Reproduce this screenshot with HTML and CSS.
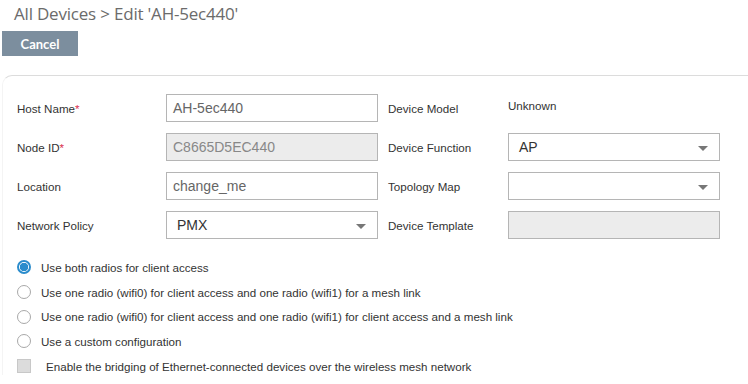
FILE: index.html
```html
<!DOCTYPE html>
<html>
<head>
<meta charset="utf-8">
<link rel="stylesheet" href="styles.css">
</head>
<body>
<div class="page">
  <h1 class="title">All Devices &gt; Edit 'AH-5ec440'</h1>
  <button class="cancel">Cancel</button>
  <div class="panel">
    <div class="grid">
      <label class="lbl">Host Name<span class="req">*</span></label>
      <div class="field">AH-5ec440</div>
      <label class="lbl">Device Model</label>
      <div class="value">Unknown</div>

      <label class="lbl">Node ID<span class="req">*</span></label>
      <div class="field disabled">C8665D5EC440</div>
      <label class="lbl">Device Function</label>
      <div class="field select">AP<span class="caret"></span></div>

      <label class="lbl">Location</label>
      <div class="field">change_me</div>
      <label class="lbl">Topology Map</label>
      <div class="field select"><span class="caret"></span></div>

      <label class="lbl">Network Policy</label>
      <div class="field select">PMX<span class="caret"></span></div>
      <label class="lbl">Device Template</label>
      <div class="field disabled"></div>
    </div>
    <ul class="options">
      <li class="opt"><span class="radio checked"></span>Use both radios for client access</li>
      <li class="opt"><span class="radio"></span>Use one radio (wifi0) for client access and one radio (wifi1) for a mesh link</li>
      <li class="opt"><span class="radio"></span>Use one radio (wifi0) for client access and one radio (wifi1) for client access and a mesh link</li>
      <li class="opt"><span class="radio"></span>Use a custom configuration</li>
      <li class="opt chk"><span class="box"></span>Enable the bridging of Ethernet-connected devices over the wireless mesh network</li>
    </ul>
  </div>
</div>
</body>
</html>
```

FILE: styles.css
```css
html, body {
  margin: 0;
  padding: 0;
  background: #fff;
}
.page {
  width: 748px;
  height: 384px;
  overflow: hidden;
  font-family: "Liberation Sans", Arial, sans-serif;
}
.title {
  margin: 0;
  padding: 2px 0 0 14px;
  height: 29px;
  box-sizing: border-box;
  font-family: "Open Sans", sans-serif;
  font-weight: 400;
  font-size: 17px;
  line-height: 24px;
  color: #6b6b6b;
  letter-spacing: -0.2px;
}
.cancel {
  display: block;
  margin: 2px 0 0 2px;
  width: 76px;
  height: 25px;
  border: none;
  background: #7c8e9e;
  color: #fff;
  font-family: "Lato", sans-serif;
  font-weight: 700;
  font-size: 13px;
  padding: 0;
}
.panel {
  margin-top: 19px;
  margin-left: 2px;
  border-top: 1px solid #dcdcdc;
  border-left: 1px solid #f4f4f4;
  border-top-left-radius: 10px;
  padding: 18px 0 0 0;
  height: 300px;
  box-sizing: border-box;
}
.grid {
  display: grid;
  grid-template-columns: 139px 212px 110px 212px;
  column-gap: 10px;
  grid-auto-rows: 28px;
  row-gap: 11px;
  padding-left: 14px;
  align-items: center;
}
.lbl {
  font-size: 11.6px;
  color: #333;
}
.req { color: #d9304f; }
.value {
  font-size: 11.6px;
  color: #333;
  align-self: start;
  padding-top: 5px;
}
.field {
  height: 28px;
  box-sizing: border-box;
  border: 1px solid #b5b5b5;
  background: #fff;
  font-size: 14px;
  color: #666;
  line-height: 26px;
  padding-left: 6px;
  position: relative;
}
.field.disabled {
  background: #ececec;
  color: #888;
}
.field.select {
  color: #333;
  padding-left: 10px;
}
.caret {
  position: absolute;
  right: 11px;
  top: 12px;
  width: 0;
  height: 0;
  border-left: 5px solid transparent;
  border-right: 5px solid transparent;
  border-top: 5px solid #777;
}
.options {
  list-style: none;
  margin: 16px 0 0 0;
  padding: 0 0 0 14px;
}
.opt {
  display: flex;
  align-items: center;
  height: 24.7px;
  font-size: 11.6px;
  color: #333;
}
.radio {
  width: 14px;
  height: 14px;
  box-sizing: border-box;
  border: 1px solid #a8a8a8;
  border-radius: 50%;
  background: #fff;
  margin-right: 10px;
  flex: none;
}
.radio.checked {
  border: 2px solid #2a8ccc;
  background: radial-gradient(circle, #2a8ccc 0 4px, #fff 4.5px);
}
.box {
  width: 14px;
  height: 14px;
  box-sizing: border-box;
  border: 1px solid #c8c8c8;
  background: #dcdcdc;
  margin-right: 15px;
  flex: none;
}
```
